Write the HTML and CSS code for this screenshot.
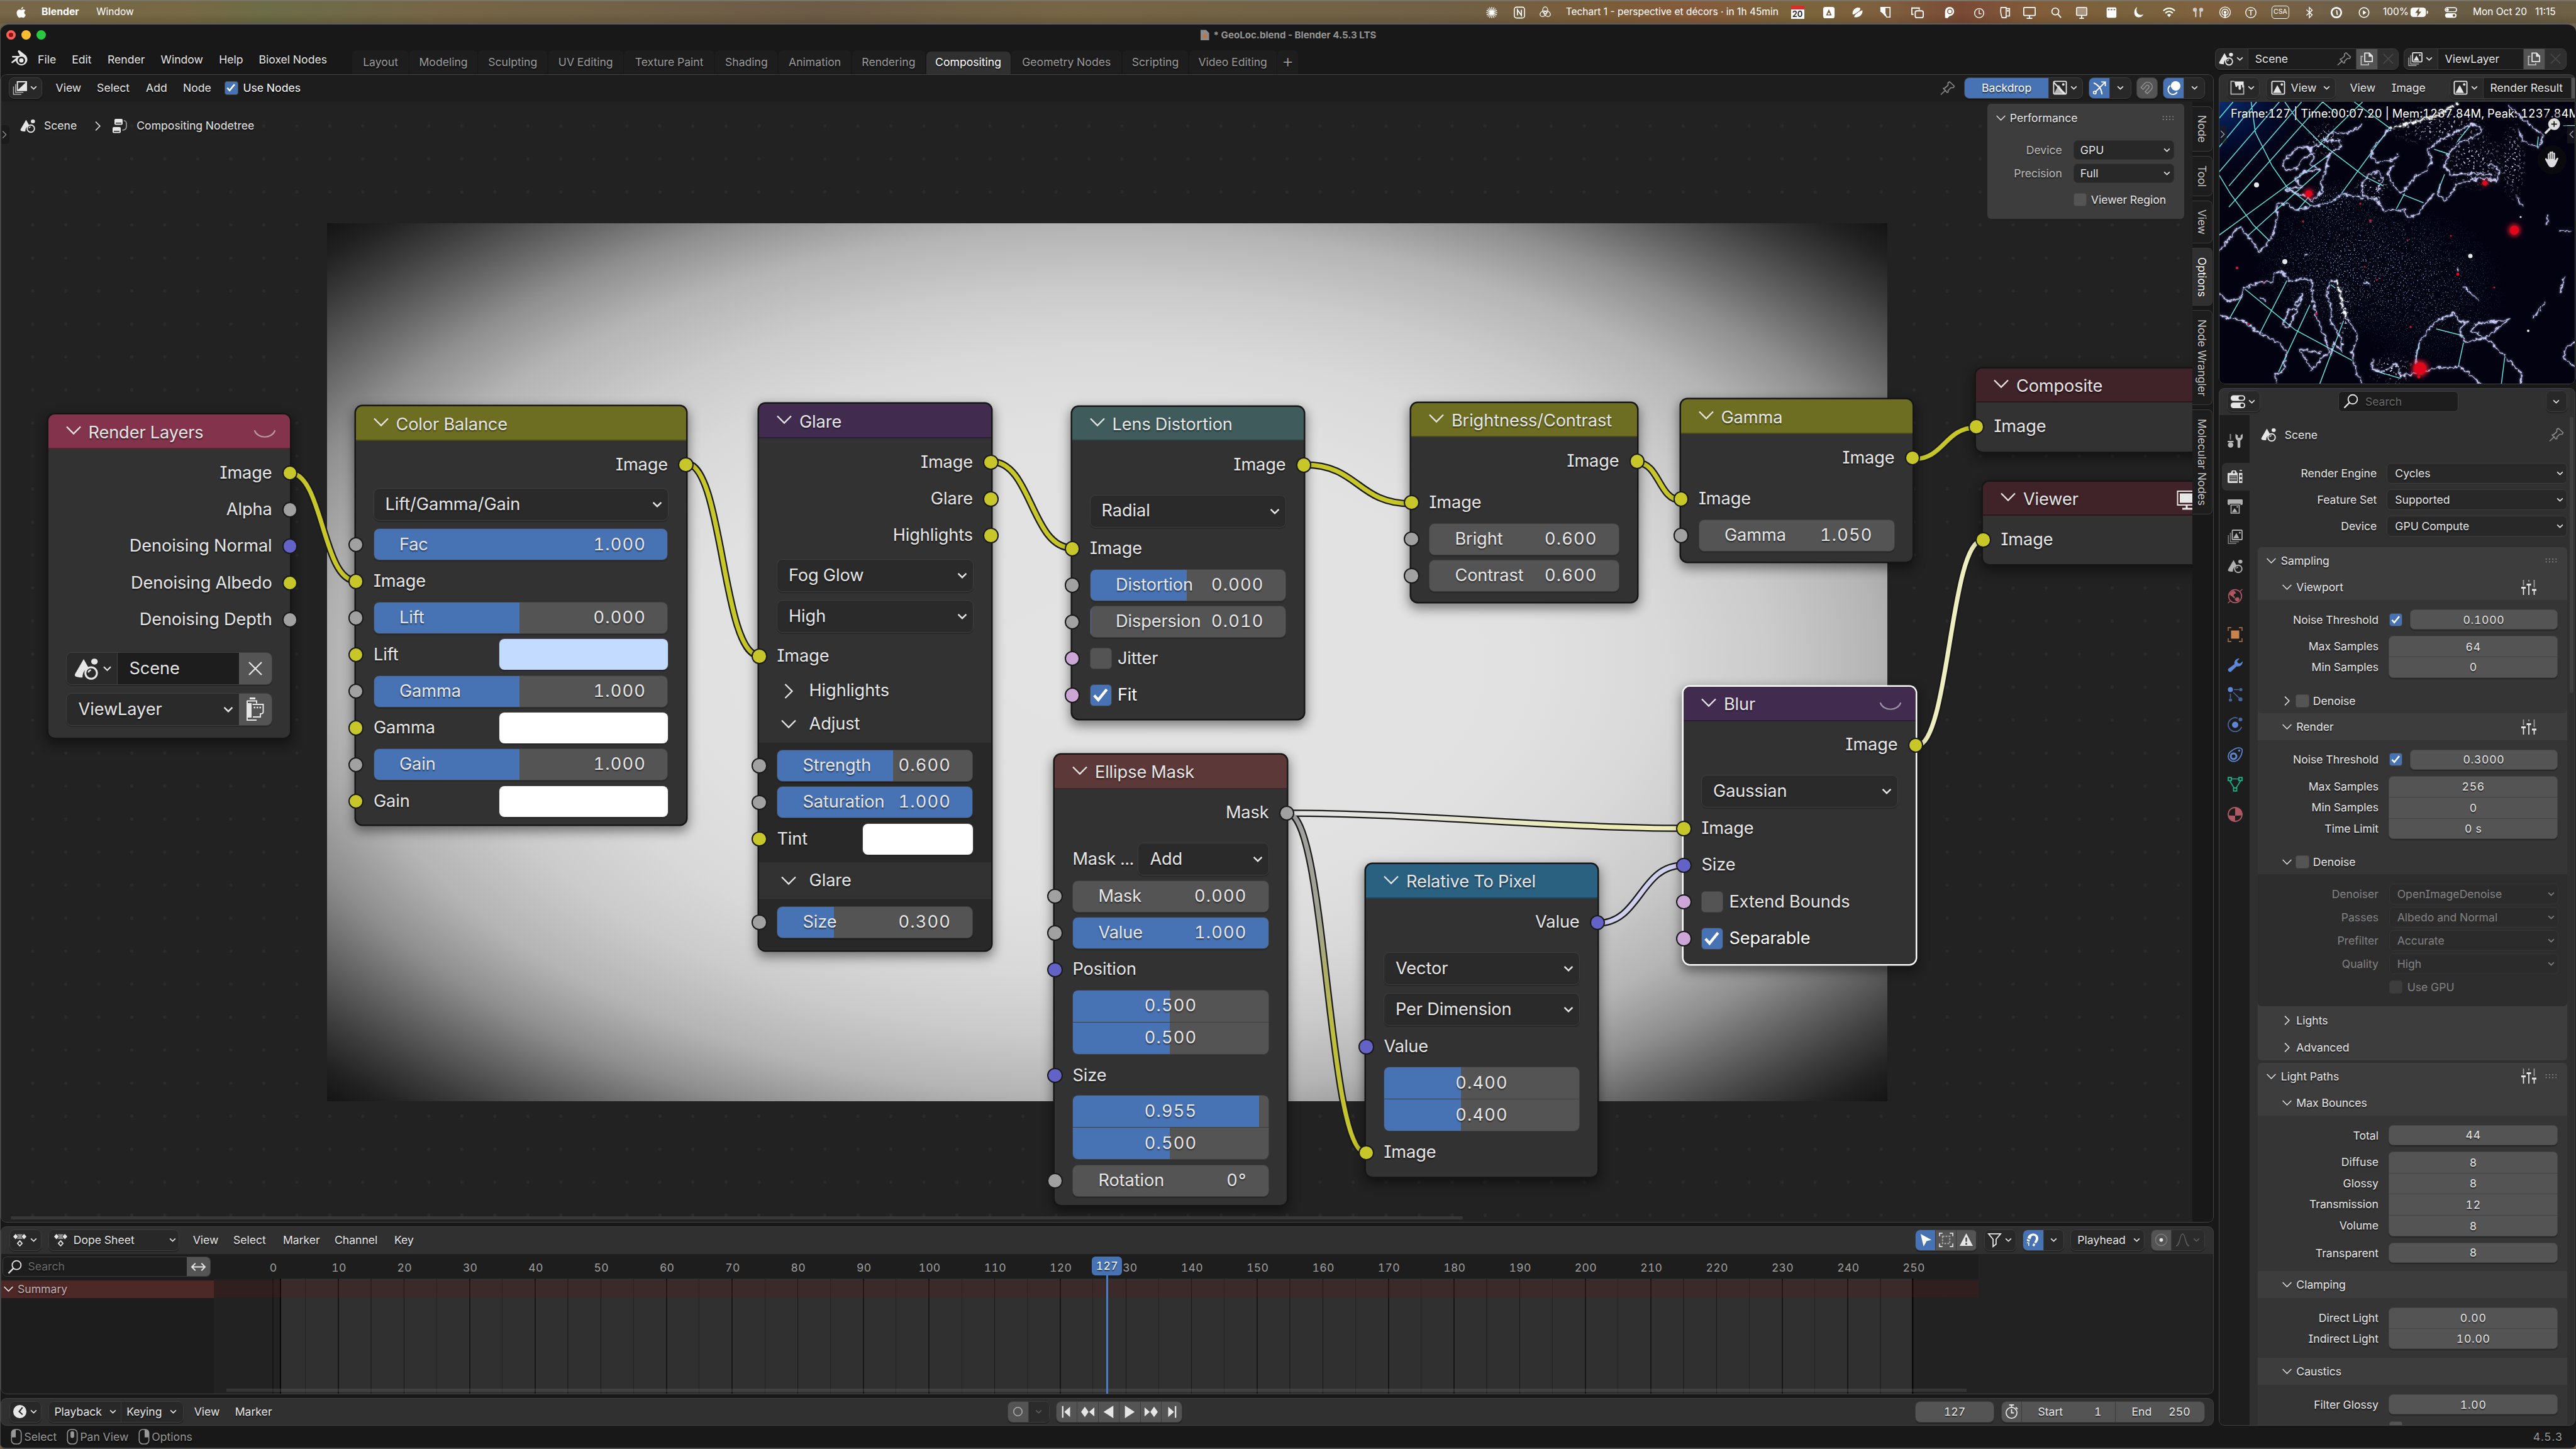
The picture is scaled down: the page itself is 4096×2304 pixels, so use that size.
FILE: index.html
```html
<!DOCTYPE html>
<html lang="en">
<head>
<meta charset="utf-8">
<title>GeoLoc.blend - Blender 4.5.3 LTS</title>
<link rel="stylesheet" href="styles.css">
</head>
<body>
<svg class="defs" width="0" height="0">
  <defs>
    <symbol id="down" viewBox="0 0 24 24"><path d="M5 8.500l7 7 7-7" fill="none" stroke="currentColor" stroke-width="2.600"/></symbol>
    <symbol id="fold" viewBox="0 0 24 24"><path d="M1 6.500l11 11 11-11" fill="none" stroke="currentColor" stroke-width="2.300"/></symbol>
    <symbol id="closed" viewBox="0 0 24 24"><path d="M6.500 1l11 11-11 11" fill="none" stroke="currentColor" stroke-width="2.300"/></symbol>
    <symbol id="check" viewBox="0 0 24 24"><path d="M4.500 13l5 5.500L20 5.500" fill="none" stroke="currentColor" stroke-width="3.400"/></symbol>
    <symbol id="x" viewBox="0 0 24 24"><path d="M4 4l16 16M20 4L4 20" fill="none" stroke="currentColor" stroke-width="1.800"/></symbol>
    <symbol id="scene" viewBox="0 0 24 24"><path d="M9.500 2.500L.8 17.500c-.8 2 .5 3.500 7.500 3.500.2-5 2-8 6.200-9.600z"/><ellipse cx="20.300" cy="5" rx="3.300" ry="3"/><circle cx="17" cy="16.500" r="5.800" fill="none" stroke="currentColor" stroke-width="1.900"/><path d="M14.200 16a3 3 0 0 1 2.600-2.500" fill="none" stroke="currentColor" stroke-width="1.500"/></symbol>
    <symbol id="pin" viewBox="0 0 24 24"><path d="M1 22.500l8-7.500M5 12.500l2.500-.5 5-4.500 0-4 2.500-1.500 7.500 7-1.500 2.300-4 .2-4.500 4.500.3 2.500-2 .5z" fill="none" stroke="currentColor" stroke-width="1.700" stroke-linejoin="round"/></symbol>
    <symbol id="dup" viewBox="0 0 24 24"><path d="M8.500 2.500h7.500l5 5v9H8.500z" fill="none" stroke="currentColor" stroke-width="1.900"/><path d="M15 2v6.500h6.500z"/><path d="M5.500 8H2.500v14h12v-3" fill="none" stroke="currentColor" stroke-width="1.900" opacity=".7"/></symbol>
    <symbol id="layers" viewBox="0 0 24 24"><rect x="7.500" y="2" width="15.500" height="15" rx="1" fill="none" stroke="currentColor" stroke-width="1.800"/><path d="M9 15l5-8.500 4.500 8.500z"/><circle cx="19.500" cy="6" r="1.500"/><path d="M4.500 6v14.500H18M1.200 10v13.300H14" fill="none" stroke="currentColor" stroke-width="1.600" opacity=".65"/></symbol>
    <symbol id="comp" viewBox="0 0 24 24"><path d="M8 2h15v14.500H8z" fill="none" stroke="currentColor" stroke-width="2"/><path d="M23 2v14.500H8z"/><path d="M5 6v13.500h13M1.500 10v13h13" fill="none" stroke="currentColor" stroke-width="1.600" opacity=".7"/></symbol>
    <symbol id="tree" viewBox="0 0 24 24"><rect x="4" y="1" width="13" height="9.500" rx="2"/><rect x="1" y="14" width="13" height="9.500" rx="2"/><path d="M6 7.800h9M3 20.800h9" stroke="#222" stroke-width="1.400"/><path d="M18.500 4c4 0 4.500 2 4.500 5v4c0 3-1 6-6.500 6" fill="none" stroke="currentColor" stroke-width="1.600" opacity=".65"/></symbol>
    <symbol id="pic" viewBox="0 0 24 24"><rect x="1.500" y="1.500" width="21" height="21" rx="1.500" fill="none" stroke="currentColor" stroke-width="1.900"/><path d="M3.500 20.500l7-13 7 13z"/><circle cx="18" cy="6.500" r="2"/></symbol>
    <symbol id="backdrop" viewBox="0 0 24 24"><rect x="1.500" y="1.500" width="21" height="21" rx="1.500" fill="none" stroke="currentColor" stroke-width="1.900"/><path d="M2 22L10 7l9 15z" opacity=".75"/><path d="M2 2l20 20h-5L2 5z"/><circle cx="17.500" cy="6.500" r="2"/></symbol>
    <symbol id="imged" viewBox="0 0 24 24"><path d="M7 1.500H1.500v21h21V8" fill="none" stroke="currentColor" stroke-width="1.900" opacity=".75"/><path d="M7 1.500h15.500v9c0 1.800-2.500 1.800-2.500 0V8.500c0-1.500-2-1.500-2 0v5c0 2.500-4 2.500-4 0v-4c0-1.500-2-1.500-2 0-.3 2-3 2-3 0z"/></symbol>
    <symbol id="gizmo" viewBox="0 0 24 24"><path d="M2 4c8 3 13 9 14 19M4.500 19.500L21 3M14.500 2.500H21.500v7" fill="none" stroke="currentColor" stroke-width="2"/><circle cx="4" cy="20" r="2.300" fill="none" stroke="currentColor" stroke-width="1.700"/></symbol>
    <symbol id="magnet" viewBox="0 0 24 24"><path d="M2.500 11.500L8.500 5c7-6.500 17 3.500 10.500 10.500l-6.300 6.300-3.400-3.400 6-6.300c2-2.600-1.200-5.800-3.800-3.800L6 14.800z" fill="none" stroke="currentColor" stroke-width="1.700"/></symbol>
    <symbol id="overlay" viewBox="0 0 24 24"><circle cx="15" cy="9" r="8"/><path d="M6 8.500a8 8 0 1 0 11.500 10.500" fill="none" stroke="currentColor" stroke-width="2"/><path d="M8 12a5 5 0 0 0 5 5" fill="none" stroke="#4772b3" stroke-width="1.600"/></symbol>
    <symbol id="dope" viewBox="0 0 24 24"><path d="M5 2l4 4.500-4 4.500-4-4.500zM19 2l4 4.500-4 4.500-4-4.500z"/><path d="M7 2.500h10l-3 4 3 4H7l3-4z" opacity=".55"/><path d="M12 13.500l3.800 4.300-3.800 4.200-3.800-4.200z" fill="none" stroke="currentColor" stroke-width="1.800"/></symbol>
    <symbol id="clock" viewBox="0 0 24 24"><circle cx="12" cy="12" r="11"/><path d="M16.500 5L11 12l5.500 5" fill="none" stroke="#282828" stroke-width="2.200"/></symbol>
    <symbol id="search" viewBox="0 0 24 24"><circle cx="15" cy="9" r="7.300" fill="none" stroke="currentColor" stroke-width="1.900"/><path d="M9.800 14.200L1.500 22.500" stroke="currentColor" stroke-width="2.400"/></symbol>
    <symbol id="props" viewBox="0 0 24 24"><rect x="0" y="1.500" width="24" height="9.500" rx="4.500"/><rect x="0" y="13.500" width="24" height="9.500" rx="4.500"/><rect x="13" y="3.500" width="9" height="5.500" rx="2.500" fill="#282828"/><rect x="16" y="15.500" width="6" height="5.500" rx="2.500" fill="#282828"/></symbol>
    <symbol id="tool" viewBox="0 0 24 24"><path d="M3.500 1h2v9h-2z" opacity=".7"/><circle cx="4.800" cy="18.500" r="4.300"/><path d="M0 12h9.500v2.200H0z"/><path d="M12.500 1v5c0 3 2 4.500 3.300 5.500V21c0 3 4.500 3 4.500 0v-9.500C21.500 10.500 24 9 24 6V1l-3.300 2v4h-4.500V3z"/></symbol>
    <symbol id="render" viewBox="0 0 24 24"><path d="M1 6h4l2-4h6l2 4h1v16H2c-1.500 0-2-1-2-2V7.500C0 6.500.5 6 1 6zM18 6h5.500v16H18z"/><path d="M19 2h4" stroke="currentColor" stroke-width="1.500"/><path d="M3 10h12v9H3z" fill="#303030"/><path d="M3.500 12h11M3.500 14.500h11M3.500 17h11" stroke="currentColor" stroke-width="1"/><circle cx="10" cy="5" r="1.800" fill="#303030"/><circle cx="21" cy="11" r="1.800" fill="#303030"/><circle cx="21" cy="17.500" r="1.800" fill="#303030"/></symbol>
    <symbol id="output" viewBox="0 0 24 24"><path d="M1 1h22l1 1v6c0 1-1 2-2 2h-1.500V8h-17v2H2c-1 0-2-1-2-2V2z"/><path d="M5.500 10h13v13h-13z" fill="none" stroke="currentColor" stroke-width="1.600"/><path d="M7 21.500l4-6.500 2.500 3 2 3.500z"/><circle cx="15.500" cy="13" r="1.300"/></symbol>
    <symbol id="world" viewBox="0 0 24 24"><circle cx="12" cy="12" r="10.300" fill="none" stroke="currentColor" stroke-width="1.700"/><path d="M4.500 6L9 3l3 1.500 1.500 3-3 1-1 3 2.500 2-1.500 2L6.500 12 3 9.500zM13 14.500l4-1 2 3-2 4-4-1-2-3z"/><path d="M20 4l3.500-3M4 20l-3.500 3" stroke="currentColor" stroke-width="1.500"/></symbol>
    <symbol id="object" viewBox="0 0 24 24"><rect x="5.500" y="5.500" width="13" height="13"/><path d="M1 6V1h5M18 1h5v5M23 18v5h-5M6 23H1v-5" fill="none" stroke="currentColor" stroke-width="1.800" opacity=".7"/></symbol>
    <symbol id="wrench" viewBox="0 0 24 24"><path d="M1 18.500L11 11c-1-5 2.500-9 8-9l-4 4.500 1.500 3L20 10l4-3.500c0 6-4.500 9-9.500 8L5.500 23c-3 1.500-6-1.500-4.500-4.500z"/></symbol>
    <symbol id="particles" viewBox="0 0 24 24"><circle cx="4.500" cy="4.500" r="4"/><g opacity=".65"><circle cx="21" cy="4.500" r="2.600"/><circle cx="20.500" cy="20" r="3.300"/><circle cx="4.500" cy="21" r="2.600"/><path d="M10 4.500h8M9 9l9 8.500M4.500 11v7" stroke="currentColor" stroke-width="1.700"/></g></symbol>
    <symbol id="physics" viewBox="0 0 24 24"><circle cx="12" cy="12.500" r="5"/><g opacity=".7"><path d="M16 2a11 11 0 1 0 6.300 14" fill="none" stroke="currentColor" stroke-width="1.700"/><circle cx="20.500" cy="4" r="3"/></g></symbol>
    <symbol id="constraint" viewBox="0 0 24 24"><path d="M5 7C9 4 13 1 18 1c5 .5 6 3 5 7-1 6-5 13-11 14.500-6 1-10.500-2-11-7C.8 12 2.500 9 5 7z" fill="none" stroke="currentColor" stroke-width="1.700"/><circle cx="9.500" cy="14.500" r="4.500" fill="none" stroke="currentColor" stroke-width="3"/><circle cx="18.500" cy="5.500" r="1.700"/></symbol>
    <symbol id="mesh" viewBox="0 0 24 24"><path d="M6 3.500h12M3.500 7l7 11M20.500 7l-7 11" stroke="currentColor" stroke-width="1.700"/><g fill="none" stroke="currentColor" stroke-width="1.800"><rect x="1" y="1.200" width="5" height="5"/><rect x="18" y="1.200" width="5" height="5"/><rect x="9.500" y="17.800" width="5" height="5"/></g></symbol>
    <symbol id="material" viewBox="0 0 24 24"><circle cx="12" cy="12" r="11" fill="none" stroke="currentColor" stroke-width="1.800"/><path d="M12 1a11 11 0 0 1 11 12.500L12 14zM12 23A11 11 0 0 1 1 13.500L12 14z"/></symbol>
    <symbol id="sliders" viewBox="0 0 24 24"><path d="M3.500 0v9M12 0v3M20.500 0v12" stroke="currentColor" stroke-width="1.800" opacity=".55"/><path d="M3.500 12v12M12 7v17M20.500 17v7" stroke="currentColor" stroke-width="1.800"/><path d="M0 12.500h7M8.500 7.500h7M17 16h7" stroke="currentColor" stroke-width="3"/></symbol>
    <symbol id="grip" viewBox="0 0 24 12"><rect x="1" y="2" width="2.400" height="2.400"/><rect x="8" y="2" width="2.400" height="2.400"/><rect x="15" y="2" width="2.400" height="2.400"/><rect x="22" y="2" width="2.400" height="2.400"/><rect x="1" y="8" width="2.400" height="2.400"/><rect x="8" y="8" width="2.400" height="2.400"/><rect x="15" y="8" width="2.400" height="2.400"/><rect x="22" y="8" width="2.400" height="2.400"/></symbol>
    <symbol id="blender" viewBox="0 0 28 28"><path d="M12 1.500c1-.8 2-.4 2.800.3l8.500 6.800a9.300 9.300 0 1 1-15.200 9L3 21.200c-1 .6-2.600-.9-1.500-1.900l8-6.700H3.300c-1.600 0-1.600-2.500 0-2.500h9.900l1.400-1.200L11.800 3.800c-.7-.6-.5-1.700.2-2.300z"/><circle cx="17" cy="17" r="6" fill="#181818"/><circle cx="17" cy="17" r="3.500"/></symbol>
    <symbol id="apple" viewBox="0 0 24 26"><path d="M16 1c.2 2.600-2 5-4.300 5C11.400 3.600 13.700 1.200 16 1zM12 7.300c1 0 2.200-1.100 4.200-1.100 1.800 0 3.400.9 4.400 2.300-3.800 2.200-3.200 7.600.7 9.100C20.200 20.600 18.100 24 16 24c-1.500 0-2.100-.9-3.900-.9S9.600 24 8.200 24C5.500 24 2 18.600 2 13.800c0-4.600 2.900-7.300 5.900-7.300 1.700 0 3 .8 4.100.8z"/></symbol>
    <symbol id="eye" viewBox="0 0 36 16"><path d="M2 2c5 13 27 13 32 0" fill="none" stroke="currentColor" stroke-width="2.200" stroke-linecap="round"/></symbol>
    <symbol id="monitor" viewBox="0 0 32 32"><rect x="1.500" y="2" width="30" height="22" fill="none" stroke="currentColor" stroke-width="2"/><rect x="5" y="5.500" width="27" height="15"/><path d="M16 24v5M9 30h18" stroke="currentColor" stroke-width="3"/></symbol>
    <symbol id="film" viewBox="0 0 28 38"><path d="M5 1.500h9" stroke="currentColor" stroke-width="3"/><path d="M1 5.500h15v4M1 5v31h15M9.500 11h17v12c0 2-2 3-4.500 3v5H10" fill="none" stroke="currentColor" stroke-width="2"/><path d="M0 9h8v23H0z"/><path d="M11.500 16h2.500M16 16h2.500M20.500 16h2.500" stroke="currentColor" stroke-width="2.500"/></symbol>
    <symbol id="m-l" viewBox="0 0 18 26"><rect x="1" y="1" width="16" height="24" rx="6" fill="none" stroke="currentColor" stroke-width="1.600"/><path d="M1 14V7c0-4 2-6 7-6v13z"/></symbol>
    <symbol id="m-m" viewBox="0 0 18 26"><rect x="1" y="1" width="16" height="24" rx="6" fill="none" stroke="currentColor" stroke-width="1.600"/><rect x="6" y="4" width="6" height="11" rx="3"/></symbol>
    <symbol id="m-r" viewBox="0 0 18 26"><rect x="1" y="1" width="16" height="24" rx="6" fill="none" stroke="currentColor" stroke-width="1.600"/><path d="M17 14V7c0-4-2-6-7-6v13z"/></symbol>
  </defs>
</svg>

<nav class="menubar">
  <div class="mac-left"><svg class="apple"><use href="#apple"/></svg><b>Blender</b><span>Window</span></div>
  <div class="mac-status">
    <svg viewBox="0 0 22 22"><path d="M11 1v20M1 11h20M4 4l14 14M18 4L4 18M7 2l8 18M15 2L7 20M2 7l18 8M20 7L2 15" stroke="#fff" stroke-width="1.300"/></svg>
    <svg viewBox="0 0 22 22"><rect x="2" y="1.500" width="18" height="19" rx="4" fill="none" stroke="#fff" stroke-width="1.700"/><path d="M7.500 16V6l7 10V6" fill="none" stroke="#fff" stroke-width="1.900"/></svg>
    <svg viewBox="0 0 22 22"><g fill="none" stroke="#fff" stroke-width="1.300"><ellipse cx="11" cy="7" rx="4.500" ry="6"/><ellipse cx="11" cy="7" rx="4.500" ry="6" transform="rotate(120 11 11)"/><ellipse cx="11" cy="7" rx="4.500" ry="6" transform="rotate(240 11 11)"/></g></svg>
    <span>Techart 1 - perspective et décors · in 1h 45min</span>
    <span class="cal">20</span>
    <svg viewBox="0 0 22 22"><rect x="1" y="1" width="20" height="20" rx="4" fill="#fff"/><path d="M11 5l5 11H6z" fill="#7b5b3c"/><circle cx="11" cy="13" r="1.800" fill="#fff"/></svg>
    <svg viewBox="0 0 22 22"><path d="M3 14C2 7 9 0 16 3c2 2-1 5-4 7s-6 5-9 4zM6 19c-1-3 8-10 14-12 2 6-5 14-14 12z" fill="#fff"/></svg>
    <svg viewBox="0 0 22 22"><path d="M3 2h16v17H13L10 12 3 9z" fill="none" stroke="#fff" stroke-width="1.800"/><path d="M2 2h9v16L3 9z" fill="#fff"/></svg>
    <svg viewBox="0 0 22 22"><rect x="7" y="8" width="14" height="12" rx="3" fill="none" stroke="#fff" stroke-width="2"/><path d="M4 14H1V3h13v3" fill="none" stroke="#fff" stroke-width="2"/></svg>
    <svg viewBox="0 0 22 22"><path d="M3 20V9a8 8 0 1 1 8 8l-4 4z" fill="#fff"/><circle cx="11.500" cy="9" r="4" fill="none" stroke="#85583c" stroke-width="1.600"/></svg>
    <svg viewBox="0 0 22 22"><circle cx="11" cy="12" r="8" fill="none" stroke="#fff" stroke-width="1.500"/><path d="M11 6v7h4" fill="none" stroke="#fff" stroke-width="1.500"/></svg>
    <svg viewBox="0 0 22 22"><path d="M4 2h9v18H6c-2-5-3-12-2-18zM13 4h6v13h-6" fill="none" stroke="#fff" stroke-width="1.800"/><circle cx="16" cy="8" r="1.600" fill="#fff"/></svg>
    <svg viewBox="0 0 22 22"><rect x="1" y="2" width="20" height="14" rx="1" fill="none" stroke="#fff" stroke-width="1.900"/><path d="M11 16v4M6 21h10" stroke="#fff" stroke-width="1.900"/></svg>
    <svg viewBox="0 0 22 22"><circle cx="10" cy="9" r="6" fill="none" stroke="#fff" stroke-width="1.800"/><path d="M14 13l6 7" stroke="#fff" stroke-width="2"/></svg>
    <svg viewBox="0 0 22 22"><rect x="2" y="2" width="18" height="14" rx="2" fill="#fff5" stroke="#fff" stroke-width="1.600"/><path d="M11 16v4M7 21h8" stroke="#fff" stroke-width="1.900"/></svg>
    <svg viewBox="0 0 22 22"><rect x="3" y="2" width="17" height="18" rx="2" fill="#fff"/><path d="M5 6h3M10 6h3M15 6h3" stroke="#7b5b3c" stroke-width="2"/></svg>
    <svg viewBox="0 0 22 22"><path d="M8 1c-4 9 2 17 11 13C15 22 3 21 3 11 3 6 5 3 8 1z" fill="#fff"/></svg>
    <svg viewBox="0 0 22 22"><path d="M1 8c6-6 14-6 20 0M4.500 12c4-4 9-4 13 0" fill="none" stroke="#fff" stroke-width="2.400"/><path d="M7.500 15c2-2 5-2 7 0L11 19z" fill="#fff"/></svg>
    <svg viewBox="0 0 22 22"><path d="M7 19V7M15 19V7" stroke="#ddd" stroke-width="2"/><circle cx="5.500" cy="6" r="3.500" fill="#ccc"/><circle cx="16.500" cy="6" r="3.500" fill="#ccc"/></svg>
    <svg viewBox="0 0 22 22"><g fill="none" stroke="#fff" stroke-width="1.500"><circle cx="11" cy="10.500" r="9.300"/><circle cx="11" cy="10.500" r="5.500"/></g><circle cx="11" cy="10.500" r="2.500" fill="#fff"/><path d="M11 13v7" stroke="#fff" stroke-width="2.500"/></svg>
    <svg viewBox="0 0 22 22"><circle cx="11" cy="11" r="9" fill="none" stroke="#fff" stroke-width="1.500"/><path d="M7 7h8M11 7v9" stroke="#fff" stroke-width="1.600"/></svg>
    <span class="csa">CSA</span>
    <svg viewBox="0 0 22 22"><path d="M6 6l10 9-5 5V2l5 5L6 16" fill="none" stroke="#fff" stroke-width="1.500"/></svg>
    <svg viewBox="0 0 22 22"><circle cx="11" cy="11" r="8.500" fill="none" stroke="#fff" stroke-width="3"/><path d="M11 7c2 3 0 5 2 8" stroke="#fff" stroke-width="2" fill="none"/></svg>
    <svg viewBox="0 0 22 22"><circle cx="11" cy="11" r="8.500" fill="none" stroke="#fff" stroke-width="1.700"/><path d="M9 7l6 4-6 4z" fill="#fff"/></svg>
    <span>100%</span>
    <svg class="batt" viewBox="0 0 30 18"><rect x="0" y="1" width="26" height="16" rx="5" fill="#fff" opacity=".95"/><path d="M27.500 6v6c1.500 0 2-1 2-3s-.5-3-2-3z" fill="#fff"/><path d="M15 1L8 10h4l-1 7 7-9h-4z" fill="#6a5a3a"/></svg>
    <svg viewBox="0 0 22 22"><rect x="1" y="2.500" width="20" height="7" rx="3.500" fill="none" stroke="#fff" stroke-width="1.600"/><rect x="1" y="12" width="20" height="8" rx="4" fill="#fff"/><circle cx="5" cy="6" r="2.500" fill="#fff"/><circle cx="16.500" cy="16" r="2.300" fill="#6d5a3c"/></svg>
    <span>Mon Oct 20</span><span>11:15</span>
  </div>
</nav>

<div class="window">
  <header class="titlebar">
    <div class="lights"><i class="red"></i><i class="amber"></i><i class="green"></i></div>
    <div class="title"><i class="doc"></i><b>* GeoLoc.blend - Blender 4.5.3 LTS</b></div>
  </header>

  <div class="topbar">
    <div class="app-menu"><svg class="logo"><use href="#blender"/></svg><span>File</span><span>Edit</span><span>Render</span><span>Window</span><span>Help</span><span>Bioxel Nodes</span></div>
    <div class="workspaces"><span>Layout</span><span>Modeling</span><span>Sculpting</span><span>UV Editing</span><span>Texture Paint</span><span>Shading</span><span>Animation</span><span>Rendering</span><span class="on">Compositing</span><span>Geometry Nodes</span><span>Scripting</span><span>Video Editing</span><span class="plus">+</span></div>
    <div class="selectors">
      <div class="grp scene-sel"><span class="c icon-drop"><svg><use href="#scene"/></svg><svg class="dn"><use href="#down"/></svg></span><span class="c name">Scene<svg class="dim"><use href="#pin"/></svg></span><span class="c lit"><svg><use href="#dup"/></svg></span><span class="c off"><svg><use href="#x"/></svg></span></div>
      <div class="grp layer-sel"><span class="c icon-drop"><svg><use href="#layers"/></svg><svg class="dn"><use href="#down"/></svg></span><span class="c name">ViewLayer</span><span class="c lit"><svg><use href="#dup"/></svg></span><span class="c off"><svg><use href="#x"/></svg></span></div>
    </div>
  </div>

  <main class="work">
    <div class="left">
      <section class="area node-area">
        <div class="bar node-bar">
          <div class="node-bar-l"><span class="grp ed"><span class="c"><svg><use href="#comp"/></svg><svg class="dn"><use href="#down"/></svg></span></span><span>View</span><span>Select</span><span>Add</span><span>Node</span><span class="cb on"><svg><use href="#check"/></svg></span><span class="w">Use Nodes</span></div>
          <div class="node-bar-r"><svg class="dim"><use href="#pin"/></svg>
            <span class="grp g1"><span class="c blue bd">Backdrop</span><span class="c"><svg><use href="#backdrop"/></svg><svg class="dn"><use href="#down"/></svg></span></span>
            <span class="grp g2"><span class="c blue"><svg><use href="#gizmo"/></svg></span><span class="c"><svg class="dn"><use href="#down"/></svg></span></span>
            <span class="grp g3"><span class="c lit faint"><svg><use href="#magnet"/></svg></span></span>
            <span class="grp g4"><span class="c blue"><svg><use href="#overlay"/></svg></span><span class="c"><svg class="dn"><use href="#down"/></svg></span></span>
          </div>
        </div>
        <div class="node-body">
          <div class="canvas">
            <div class="plane">
              <div class="backdrop"></div>
              <svg class="links" width="3600" height="2000">
                <defs>
                  <linearGradient id="lg1" gradientUnits="userSpaceOnUse" x1="2047" y1="0" x2="2676" y2="0"><stop offset="0" stop-color="#e4e4e4"/><stop offset=".35" stop-color="#e4e4da"/><stop offset=".7" stop-color="#ecebb8"/><stop offset="1" stop-color="#eeedb4"/></linearGradient>
                  <linearGradient id="lg2" gradientUnits="userSpaceOnUse" x1="0" y1="1293" x2="0" y2="1832"><stop offset="0" stop-color="#a1a1a1"/><stop offset=".3" stop-color="#a1a192"/><stop offset=".65" stop-color="#bdbd40"/><stop offset="1" stop-color="#c7c729"/></linearGradient>
                </defs>
                <g class="edge">
                  <path d="M461 752C513 752 513 923 565 923"/><path d="M1091 737C1150 737 1148 1042 1207 1042"/><path d="M1576 734C1640 734 1640 871 1704 871"/><path d="M2074 739C2160 739 2158 801 2244 801"/><path d="M2604 736C2638 736 2638 795 2672 795"/><path d="M3042 730C3092 730 3092 680 3142 680"/><path d="M2047 1293C2250 1293 2480 1317 2676 1317"/><path d="M2047 1293C2110 1293 2110 1833 2172 1833"/><path d="M2540 1468C2608 1468 2608 1376 2676 1376"/><path d="M3047 1186C3100 1186 3100 859 3153 859"/>
                </g>
                <g class="wire">
                  <path d="M461 752C513 752 513 923 565 923"/><path d="M1091 737C1150 737 1148 1042 1207 1042"/><path d="M1576 734C1640 734 1640 871 1704 871"/><path d="M2074 739C2160 739 2158 801 2244 801"/><path d="M2604 736C2638 736 2638 795 2672 795"/><path d="M3042 730C3092 730 3092 680 3142 680"/><path d="M2047 1293C2250 1293 2480 1317 2676 1317" stroke="url(#lg1)"/><path d="M2047 1293C2110 1293 2110 1833 2172 1833" stroke="url(#lg2)"/><path class="wv" d="M2540 1468C2608 1468 2608 1376 2676 1376"/><path class="wy" d="M3047 1186C3100 1186 3100 859 3153 859"/>
                </g>
              </svg>

              <article class="node n-layers">
                <h3><svg><use href="#fold"/></svg>Render Layers<svg class="eye"><use href="#eye"/></svg></h3>
                <div class="row out">Image<i class="s y"></i></div><div class="row out">Alpha<i class="s g"></i></div><div class="row out">Denoising Normal<i class="s v"></i></div><div class="row out">Denoising Albedo<i class="s y"></i></div><div class="row out">Denoising Depth<i class="s g"></i></div>
                <div class="drow t16"><div class="idsel"><span class="ic"><svg><use href="#scene"/></svg><svg class="dn"><use href="#down"/></svg></span><span class="nm">Scene</span><span class="bt"><svg><use href="#x"/></svg></span></div></div>
                <div class="drow"><div class="idsel"><span class="vl">ViewLayer<svg class="dn"><use href="#down"/></svg></span><span class="bt film"><svg><use href="#film"/></svg></span></div></div>
              </article>

              <article class="node n-balance olive">
                <h3><svg><use href="#fold"/></svg>Color Balance</h3>
                <div class="row out">Image<i class="s y"></i></div>
                <div class="drow t2"><div class="drop">Lift/Gamma/Gain<svg class="dn"><use href="#down"/></svg></div></div>
                <div class="row t2"><i class="s g"></i><div class="num" style="--f:100%"><span>Fac</span><em>1.000</em></div></div>
                <div class="row"><i class="s y"></i>Image</div>
                <div class="row"><i class="s g"></i><div class="num" style="--f:49.500%"><span>Lift</span><em>0.000</em></div></div>
                <div class="row"><i class="s y"></i>Lift<b class="swatch pale"></b></div>
                <div class="row"><i class="s g"></i><div class="num" style="--f:49.500%"><span>Gamma</span><em>1.000</em></div></div>
                <div class="row"><i class="s y"></i>Gamma<b class="swatch"></b></div>
                <div class="row"><i class="s g"></i><div class="num" style="--f:49.500%"><span>Gain</span><em>1.000</em></div></div>
                <div class="row"><i class="s y"></i>Gain<b class="swatch"></b></div>
              </article>

              <article class="node n-glare purple">
                <h3><svg><use href="#fold"/></svg>Glare</h3>
                <div class="row out">Image<i class="s y"></i></div><div class="row out">Glare<i class="s y"></i></div><div class="row out">Highlights<i class="s y"></i></div>
                <div class="drow t2"><div class="drop">Fog Glow<svg class="dn"><use href="#down"/></svg></div></div>
                <div class="drow"><div class="drop">High<svg class="dn"><use href="#down"/></svg></div></div>
                <div class="row t2"><i class="s y"></i>Image</div>
                <div class="sub s52"><svg><use href="#closed"/></svg>Highlights</div>
                <div class="sub s56"><svg><use href="#fold"/></svg>Adjust</div>
                <div class="inner">
                  <div class="row"><i class="s g"></i><div class="num" style="--f:59.500%"><span>Strength</span><em>0.600</em></div></div>
                  <div class="row"><i class="s g"></i><div class="num" style="--f:100%"><span>Saturation</span><em>1.000</em></div></div>
                  <div class="row"><i class="s y"></i>Tint<b class="swatch"></b></div>
                </div>
                <div class="sub s58"><svg><use href="#fold"/></svg>Glare</div>
                <div class="inner last"><div class="row"><i class="s g"></i><div class="num" style="--f:29%"><span>Size</span><em>0.300</em></div></div></div>
              </article>

              <article class="node n-lens teal">
                <h3><svg><use href="#fold"/></svg>Lens Distortion</h3>
                <div class="row out">Image<i class="s y"></i></div>
                <div class="drow t12"><div class="drop">Radial<svg class="dn"><use href="#down"/></svg></div></div>
                <div class="row up2"><i class="s y"></i>Image</div>
                <div class="row"><i class="s g"></i><div class="num" style="--f:49.200%"><span>Distortion</span><em>0.000</em></div></div>
                <div class="row"><i class="s g"></i><div class="num" style="--f:.4%"><span>Dispersion</span><em>0.010</em></div></div>
                <div class="row"><i class="s b"></i><i class="box"></i>Jitter</div>
                <div class="row w"><i class="s b"></i><i class="box on"><svg><use href="#check"/></svg></i>Fit</div>
              </article>

              <article class="node n-bright olive">
                <h3><svg><use href="#fold"/></svg>Brightness/Contrast</h3>
                <div class="row out t4">Image<i class="s y"></i></div>
                <div class="row t7"><i class="s y"></i>Image</div>
                <div class="row"><i class="s g"></i><div class="num"><span>Bright</span><em>0.600</em></div></div>
                <div class="row"><i class="s g"></i><div class="num"><span>Contrast</span><em>0.600</em></div></div>
              </article>

              <article class="node n-gamma olive">
                <h3><svg><use href="#fold"/></svg>Gamma</h3>
                <div class="row out t4">Image<i class="s y"></i></div>
                <div class="row t7"><i class="s y"></i>Image</div>
                <div class="row"><i class="s g"></i><div class="num"><span>Gamma</span><em>1.050</em></div></div>
              </article>

              <article class="node n-composite wine">
                <h3><svg><use href="#fold"/></svg>Composite</h3>
                <div class="row t3"><i class="s y"></i>Image</div>
              </article>
              <article class="node n-viewer wine">
                <h3><svg><use href="#fold"/></svg>Viewer<svg class="mon"><use href="#monitor"/></svg></h3>
                <div class="row t3"><i class="s y"></i>Image</div>
              </article>

              <article class="node n-ellipse brick">
                <h3><svg><use href="#fold"/></svg>Ellipse Mask</h3>
                <div class="row out">Mask<i class="s g"></i></div>
                <div class="row t15"><span class="lab">Mask ...</span><div class="drop">Add<svg class="dn"><use href="#down"/></svg></div></div>
                <div class="row t1"><i class="s g"></i><div class="num"><span>Mask</span><em>0.000</em></div></div>
                <div class="row"><i class="s g"></i><div class="num" style="--f:100%"><span>Value</span><em>1.000</em></div></div>
                <div class="row"><i class="s v"></i>Position</div>
                <div class="vec t3"><em style="--f:49.500%">0.500</em><em style="--f:49.500%">0.500</em></div>
                <div class="row t4"><i class="s v"></i>Size</div>
                <div class="vec t2"><em style="--f:95.300%">0.955</em><em style="--f:49.500%">0.500</em></div>
                <div class="row t4"><i class="s g"></i><div class="num"><span>Rotation</span><em>0°</em></div></div>
              </article>

              <article class="node n-pixel blue-h">
                <h3><svg><use href="#fold"/></svg>Relative To Pixel</h3>
                <div class="row out t3">Value<i class="s v"></i></div>
                <div class="drow t12"><div class="drop">Vector<svg class="dn"><use href="#down"/></svg></div></div>
                <div class="drow"><div class="drop">Per Dimension<svg class="dn"><use href="#down"/></svg></div></div>
                <div class="row up2"><i class="s v"></i>Value</div>
                <div class="vec t3"><em style="--f:39.300%">0.400</em><em style="--f:39.300%">0.400</em></div>
                <div class="row t4"><i class="s y"></i>Image</div>
              </article>

              <article class="node n-blur purple selected">
                <h3><svg><use href="#fold"/></svg>Blur<svg class="eye"><use href="#eye"/></svg></h3>
                <div class="row out t3">Image<i class="s y"></i></div>
                <div class="drow t12"><div class="drop">Gaussian<svg class="dn"><use href="#down"/></svg></div></div>
                <div class="row up2"><i class="s y"></i>Image</div>
                <div class="row"><i class="s v"></i>Size</div>
                <div class="row"><i class="s b"></i><i class="box"></i>Extend Bounds</div>
                <div class="row w"><i class="s b"></i><i class="box on"><svg><use href="#check"/></svg></i>Separable</div>
              </article>
            </div>

            <div class="crumbs"><svg><use href="#scene"/></svg><span>Scene</span><svg class="sm"><use href="#closed"/></svg><svg><use href="#tree"/></svg><span class="nt">Compositing Nodetree</span></div>
            <div class="edge-arrow"><svg><use href="#closed"/></svg></div>
            <aside class="npanel">
              <h4><svg><use href="#fold"/></svg>Performance<svg class="grip"><use href="#grip"/></svg></h4>
              <label>Device</label><div class="dd">GPU<svg class="dn"><use href="#down"/></svg></div>
              <label>Precision</label><div class="dd">Full<svg class="dn"><use href="#down"/></svg></div>
              <div class="chk"><i class="cb"></i>Viewer Region</div>
            </aside>
            <div class="hscroll"></div>
          </div>
          <div class="vtabs"><span class="v1">Node</span><span class="v2">Tool</span><span class="v3">View</span><span class="v4 on">Options</span><span class="v5">Node Wrangler</span><span class="v6">Molecular Nodes</span></div>
        </div>
      </section>

      <section class="area dope-area">
        <div class="bar">
          <div class="dope-l"><span class="grp"><span class="c"><svg><use href="#dope"/></svg><svg class="dn"><use href="#down"/></svg></span></span><span class="grp mode"><span class="c"><svg><use href="#dope"/></svg>Dope Sheet<svg class="dn"><use href="#down"/></svg></span></span><span>View</span><span>Select</span><span>Marker</span><span>Channel</span><span>Key</span></div>
          <div class="dope-r">
            <span class="grp d1"><span class="c blue"><svg viewBox="0 0 24 24"><path d="M4 2l18 10-8 2-5 9z"/></svg></span><span class="c lit"><svg viewBox="0 0 24 24"><path d="M1 6V1h5M18 1h5v5M23 18v5h-5M6 23H1v-5" fill="none" stroke="#ddd" stroke-width="1.800"/><rect x="6" y="6" width="12" height="12" fill="none" stroke="#aaa" stroke-width="2" stroke-dasharray="3 2"/></svg></span><span class="c lit"><svg viewBox="0 0 24 24"><path d="M12 1l11 21H1z"/><path d="M12 8v7M12 17v3" stroke="#444" stroke-width="2.500"/></svg></span></span>
            <span class="grp d2"><span class="c"><svg viewBox="0 0 24 24"><path d="M2 2h20l-7.500 9v8l-5 4V11z" fill="none" stroke="#e6e6e6" stroke-width="1.900"/></svg><svg class="dn"><use href="#down"/></svg></span></span>
            <span class="grp d3"><span class="c blue"><svg viewBox="0 0 24 24"><path d="M3 9C5-1 20-1 21 9c0 4-2 6-4 9l-3-2c6-8 1-12-2-11-3 0-3 4-4 6zM13 17.500l3 2-2 3.500-3-2zM2 10.500l5 2-1 2.500-4-1.500z"/><path d="M2 17h3v5" stroke="#fff" stroke-width="1.700" fill="none"/></svg></span><span class="c"><svg class="dn"><use href="#down"/></svg></span></span>
            <span class="grp d4"><span class="c">Playhead<svg class="dn"><use href="#down"/></svg></span></span>
            <span class="grp d5"><span class="c lit"><svg viewBox="0 0 24 24"><circle cx="12" cy="12" r="9.500" fill="none" stroke="#777" stroke-width="1.700"/><circle cx="12" cy="12" r="3"/></svg></span><span class="c ghost"><svg viewBox="0 0 24 24"><path d="M1 22C8 22 7 2 12 2s4 20 11 20" fill="none" stroke="currentColor" stroke-width="1.600"/></svg><svg class="dn"><use href="#down"/></svg></span></span>
          </div>
        </div>
        <div class="dope-body">
          <div class="channels">
            <div class="find"><svg><use href="#search"/></svg><span>Search</span><b><svg viewBox="0 0 24 24"><path d="M7 6l-6 6 6 6M17 6l6 6-6 6M1 12h22" fill="none" stroke="currentColor" stroke-width="2"/></svg></b></div>
            <div class="summary"><svg><use href="#fold"/></svg>Summary</div>
          </div>
          <div class="timeline">
            <div class="ruler"><span>0</span><span>10</span><span>20</span><span>30</span><span>40</span><span>50</span><span>60</span><span>70</span><span>80</span><span>90</span><span>100</span><span>110</span><span>120</span><span>130</span><span>140</span><span>150</span><span>160</span><span>170</span><span>180</span><span>190</span><span>200</span><span>210</span><span>220</span><span>230</span><span>240</span><span>250</span></div>
            <div class="tracks"><div class="range"></div><div class="ticks"></div><div class="band"></div><div class="tscroll"></div></div>
            <div class="playhead"><b>127</b></div>
          </div>
        </div>
      </section>

      <section class="area play-area">
        <div class="bar">
          <div class="play-l"><span class="grp"><span class="c"><svg><use href="#clock"/></svg><svg class="dn"><use href="#down"/></svg></span></span><span class="grp"><span class="c pb">Playback<svg class="dn"><use href="#down"/></svg></span><span class="c">Keying<svg class="dn"><use href="#down"/></svg></span></span><span>View</span><span>Marker</span></div>
          <div class="play-c"><span class="grp rec"><span class="c lit"><svg viewBox="0 0 24 24"><circle cx="12" cy="12" r="7" fill="none" stroke="#aaa" stroke-width="1.700"/></svg></span><span class="c ghost"><svg class="dn"><use href="#down"/></svg></span></span>
            <span class="grp trans"><span class="c lit"><svg viewBox="0 0 24 24"><path d="M4 2h2.500v20H4zM18 3v18L8 12z"/></svg></span><span class="c lit"><svg viewBox="0 0 24 24"><path d="M6.500 3l6.500 9-6.500 9L0 12zM23 4v16l-9-8z"/></svg></span><span class="c lit"><svg viewBox="0 0 24 24"><path d="M20 1v22L3 12z"/></svg></span><span class="c lit"><svg viewBox="0 0 24 24"><path d="M4 1v22l17-11z"/></svg></span><span class="c lit"><svg viewBox="0 0 24 24"><path d="M17.500 3l6.500 9-6.500 9-6.500-9zM1 4v16l9-8z"/></svg></span><span class="c lit"><svg viewBox="0 0 24 24"><path d="M17.500 2H20v20h-2.500zM6 3v18l10-9z"/></svg></span></span></div>
          <div class="play-r"><span class="grp cur"><span class="c lit">127</span></span><span class="grp ends"><span class="c lit ck"><svg viewBox="0 0 24 24"><circle cx="12" cy="14" r="9" fill="none" stroke="#e6e6e6" stroke-width="1.800"/><path d="M12 8v6h4M8 1h8M12 1v4M19 5l3 3" fill="none" stroke="#e6e6e6" stroke-width="2"/></svg></span><span class="c lit st"><span>Start</span><span>1</span></span><span class="c lit en"><span>End</span><span>250</span></span></span></div>
        </div>
      </section>
    </div>

    <div class="right">
      <section class="area image-area">
        <div class="bar image-bar">
          <span class="grp"><span class="c"><svg><use href="#imged"/></svg><svg class="dn"><use href="#down"/></svg></span></span>
          <span class="grp vw"><span class="c"><svg><use href="#pic"/></svg>View<svg class="dn"><use href="#down"/></svg></span></span>
          <span>View</span><span>Image</span>
          <span class="grp rr"><span class="c ri"><svg><use href="#pic"/></svg><svg class="dn"><use href="#down"/></svg></span><span class="c name">Render Result</span><span class="c lit"></span></span>
        </div>
        <div class="render">
          <svg class="map" viewBox="0 0 567 449" preserveAspectRatio="none">
            <defs>
              <radialGradient id="sky" cx="0" cy="0" r=".3"><stop offset="0" stop-color="#0a2d6e"/><stop offset=".4" stop-color="#03103a"/><stop offset="1" stop-color="#020316" stop-opacity="0"/></radialGradient>
              <filter id="rough" x="-5%" y="-5%" width="110%" height="110%"><feTurbulence type="fractalNoise" baseFrequency=".16" numOctaves="2" seed="4"/><feDisplacementMap in="SourceGraphic" scale="9" xChannelSelector="R" yChannelSelector="G" result="d"/><feGaussianBlur in="d" stdDeviation="1.800" result="b"/><feMerge><feMergeNode in="b"/><feMergeNode in="d"/></feMerge></filter>
              <filter id="lights" x="0" y="0" width="100%" height="100%"><feTurbulence type="fractalNoise" baseFrequency=".45" numOctaves="2" seed="9"/><feColorMatrix values="0 0 0 0 .12  0 0 0 0 .5  0 0 0 0 .78  12 0 0 0 -7.700"/><feComposite in2="SourceGraphic" operator="in"/></filter>
              <filter id="islands" x="0" y="0" width="100%" height="100%"><feTurbulence type="fractalNoise" baseFrequency=".26" numOctaves="2" seed="21"/><feColorMatrix values="0 0 0 0 .82  0 0 0 0 .83  0 0 0 0 1  14 0 0 0 -8.700"/><feComposite in2="SourceGraphic" operator="in"/></filter>
              <filter id="glow" x="-100%" y="-100%" width="300%" height="300%"><feGaussianBlur stdDeviation="4"/></filter>
              <radialGradient id="fade"><stop offset="0" stop-color="#fff"/><stop offset="1" stop-color="#fff" stop-opacity="0"/></radialGradient>
            </defs>
            <rect width="567" height="449" fill="#020211"/><rect width="567" height="449" fill="url(#sky)"/>
            <g transform="scale(.6686 .3343) translate(-718 -155)">
              <g class="grid">
                <path d="M718 235L752 155M718 372L808 155M718 490L862 155M742 555L915 155M742 655L965 155M718 790L985 400M785 795L960 480M905 670L935 600M1010 590L1125 275M960 350L1060 155M718 500L745 590L800 740L838 815M795 155L805 300L845 460L880 560L935 645M875 155L905 240L960 350L1065 510L1110 555M1040 155L1125 280M965 155L1000 215M1230 380L1268 405M1155 595L1205 635M1140 665L1160 590M1285 345L1315 270M745 1180L772 1085M780 1045L900 1240L1035 1385M815 1258L880 1005M860 1440L935 1120M958 1497L1015 1195M1090 1435L1150 1470M985 1025L995 1040M1235 1235L1300 1268M1195 1300L1187 1375M1288 1412L1300 1300M1390 1497L1398 1370M1537 268H1566M1475 370L1478 320M1255 500L1238 585"/>
              </g>
            </g>
            <g filter="url(#rough)"><g transform="scale(.6686 .3343) translate(-718 -155)"><g class="coast">
              <path class="hot" d="M1290 160L1240 215L1200 240L1150 270L1125 280"/>
              <path d="M1125 280L1105 330L1085 370L1080 420L1100 445L1130 430L1145 410M1135 450L1120 490L1125 530L1150 590L1165 560L1185 510L1215 480L1225 420L1215 380L1250 330L1290 290L1320 262L1342 280L1335 310L1290 350L1265 400L1255 460L1270 500L1320 495L1370 500"/>
              <path d="M1245 545L1240 600L1260 625L1270 590L1285 545L1340 520L1380 530L1385 480L1360 450M1230 590L1205 650L1195 690L1165 700L1160 670L1110 670L1095 620L1060 600L1060 540L1075 500L1100 485L1110 520L1095 580"/>
              <path d="M1060 610L1010 595L990 625L960 645L900 670L885 640L856 636L858 700L845 800L815 870L790 800L770 752L760 760L718 870"/>
              <path d="M965 350L935 375L945 420L935 450L960 480L925 485L900 520L915 560L875 570L930 605L940 628L965 580L960 540L975 470L980 400L1010 370L1005 340L970 340L985 300L1025 305L1060 265"/>
              <path d="M870 440L875 480L905 470L915 430L940 400L930 370L905 375L885 410Z"/>
              <path d="M718 1065L740 1108L770 1090L780 1040L820 1010L845 1010L850 970L868 958L885 1005L920 995L940 1010L940 1080L950 1180L970 1270L980 1350L965 1370L940 1430L910 1330L960 1350"/>
              <path d="M1000 1005L985 1005L975 1060L985 1150L985 1200L1010 1280L1010 1340L990 1300L985 1370M915 1070L900 1120L910 1128ZM885 1140L870 1220L885 1225L905 1140Z"/>
              <path class="hot" d="M1000 1005L1010 1100L1020 1180"/><path d="M1020 1180L1050 1260L1035 1350L1045 1440L1060 1490M718 1170L750 1185L780 1200L810 1250L860 1300L880 1350L870 1440L850 1450L855 1490"/>
              <path d="M1085 1380L1080 1420L1110 1440L1140 1400L1150 1460L1175 1450L1200 1440L1240 1420L1290 1415L1310 1440L1340 1497M1185 1400L1195 1300L1215 1240L1240 1190L1280 1160L1290 1200L1310 1200L1290 1240L1305 1300L1360 1270L1395 1210L1410 1190L1330 1210L1320 1240L1360 1290L1400 1370L1440 1450L1435 1497"/>
              <path d="M1566 1300L1545 1320L1537 1370L1566 1420M1540 985L1530 1060M1495 1105L1480 1150L1465 1185M1300 1030L1315 1060L1335 1100M1285 940L1288 965M1500 695V735M1405 170L1460 270L1490 310L1480 375L1440 340L1430 280M1525 768H1558M1430 605L1440 655M1060 1018L1078 1012M920 885L932 880M815 1085L830 1105"/>
            </g></g></g>
            <g filter="url(#islands)"><ellipse cx="405" cy="92" rx="58" ry="52" fill="url(#fade)"/><ellipse cx="345" cy="38" rx="85" ry="34" fill="url(#fade)"/><ellipse cx="468" cy="95" rx="22" ry="70" fill="url(#fade)"/><ellipse cx="245" cy="138" rx="32" ry="34" fill="url(#fade)"/><ellipse cx="168" cy="60" rx="34" ry="30" fill="url(#fade)"/><ellipse cx="275" cy="425" rx="42" ry="28" fill="url(#fade)"/><ellipse cx="200" cy="335" rx="14" ry="60" fill="url(#fade)"/></g>
            <g filter="url(#lights)"><ellipse cx="210" cy="255" rx="160" ry="120" fill="url(#fade)"/><ellipse cx="330" cy="300" rx="130" ry="130" fill="url(#fade)" opacity=".7"/><ellipse cx="180" cy="160" rx="50" ry="40" fill="url(#fade)"/></g>
            <g fill="#ff1b33" filter="url(#glow)"><circle cx="143" cy="146" r="7"/><circle cx="470" cy="204" r="9"/><circle cx="320" cy="424" r="12"/><circle cx="423" cy="129" r="4"/></g>
            <g fill="#e3061b"><circle cx="143" cy="146" r="5.500"/><circle cx="470" cy="204" r="7"/><circle cx="320" cy="424" r="9.500"/><circle cx="423" cy="129" r="4"/><circle cx="380" cy="274" r="2.500"/><circle cx="318" cy="437" r="2.500"/></g>
            <g fill="#c4183f"><circle cx="134" cy="190" r="1.800"/><circle cx="241" cy="189" r="2.200"/><circle cx="225" cy="162" r="1.800"/><circle cx="300" cy="220" r="1.500"/><circle cx="369" cy="213" r="1.500"/><circle cx="29" cy="264" r="2.200"/><circle cx="232" cy="262" r="1.500"/><circle cx="72" cy="286" r="1.500"/><circle cx="251" cy="283" r="1.500"/><circle cx="155" cy="337" r="2"/><circle cx="47" cy="353" r="1.800"/><circle cx="305" cy="358" r="1.800"/><circle cx="438" cy="295" r="1.600"/></g>
            <g fill="#e6e6e6"><circle cx="60" cy="132" r="4"/><circle cx="105" cy="254" r="4"/><circle cx="400" cy="245" r="3.500"/><circle cx="492" cy="364" r="2"/><circle cx="480" cy="183" r="1.600"/></g>
          </svg>
          <p>Frame:127 | Time:00:07.20 | Mem:1237.84M, Peak: 1237.84M</p>
          <div class="nav zoom"><svg viewBox="0 0 30 30"><circle cx="18" cy="11.500" r="10.500"/><path d="M11 19l-9 9" stroke="currentColor" stroke-width="4"/><path d="M18 6.500v10M13 11.500h10" stroke="#111" stroke-width="1.800"/></svg></div>
          <div class="nav hand"><svg viewBox="0 0 30 30"><path d="M8 15V6c0-2.500 3-2.500 3 0v-3c0-2.700 3.300-2.700 3.300 0v-.6c0-2.600 3.300-2.600 3.300.4V5c0-2.600 3.200-2.600 3.200 0v12l2.500-4c1.500-2 4-1 3 1.300L22 24c-1.500 3-3.500 5-7 5-4 0-5.500-2-7-5L3.500 15.500c-1-2.400 1.500-3.500 2.700-1.700z"/><path d="M11 6v8M14.300 4v10M17.600 5v9" stroke="#111" stroke-width="1"/></svg></div>
          <div class="sidearrow l"><svg><use href="#closed"/></svg></div><div class="sidearrow rt"><svg><use href="#closed"/></svg></div>
        </div>
      </section>

      <section class="area props-area">
        <div class="bar props-bar"><span class="grp"><span class="c"><svg><use href="#props"/></svg><svg class="dn"><use href="#down"/></svg></span></span><span class="searchbox"><svg><use href="#search"/></svg>Search</span><span class="grp opt"><span class="c"><svg class="dn"><use href="#down"/></svg></span></span></div>
        <div class="props-body">
          <nav class="ptabs">
            <span class="tool"><svg><use href="#tool"/></svg></span>
            <span class="on"><svg><use href="#render"/></svg></span><span><svg><use href="#output"/></svg></span><span><svg><use href="#layers"/></svg></span><span><svg><use href="#scene"/></svg></span><span class="red"><svg><use href="#world"/></svg></span>
            <span class="orange"><svg><use href="#object"/></svg></span><span class="bl"><svg><use href="#wrench"/></svg></span><span class="bl"><svg><use href="#particles"/></svg></span><span class="bl"><svg><use href="#physics"/></svg></span><span class="bl"><svg><use href="#constraint"/></svg></span><span class="gr"><svg><use href="#mesh"/></svg></span><span class="red"><svg><use href="#material"/></svg></span>
          </nav>
          <div class="plist">
            <div class="ctx"><svg><use href="#scene"/></svg><span>Scene</span><svg class="dim"><use href="#pin"/></svg></div>
            <div class="top3"><label>Render Engine</label><div class="dd">Cycles<svg class="dn"><use href="#down"/></svg></div><label>Feature Set</label><div class="dd">Supported<svg class="dn"><use href="#down"/></svg></div><label>Device</label><div class="dd">GPU Compute<svg class="dn"><use href="#down"/></svg></div></div>

            <div class="panel p-sampling">
              <h4><svg><use href="#fold"/></svg>Sampling<svg class="grip"><use href="#grip"/></svg></h4>
              <h5 class="h41"><svg><use href="#fold"/></svg>Viewport<svg class="sl"><use href="#sliders"/></svg></h5>
              <div class="sec b1">
                <div class="f"><label>Noise Threshold</label><i class="cb on"><svg><use href="#check"/></svg></i><em class="val">0.1000</em></div>
                <div class="stack"><label>Max Samples</label><em>64</em><label>Min Samples</label><em>0</em></div>
                <h6><svg><use href="#closed"/></svg><i class="cb"></i>Denoise</h6>
              </div>
              <h5 class="h42"><svg><use href="#fold"/></svg>Render<svg class="sl"><use href="#sliders"/></svg></h5>
              <div class="sec b2">
                <div class="f"><label>Noise Threshold</label><i class="cb on"><svg><use href="#check"/></svg></i><em class="val">0.3000</em></div>
                <div class="stack"><label>Max Samples</label><em>256</em><label>Min Samples</label><em>0</em><label>Time Limit</label><em>0 s</em></div>
                <h6><svg><use href="#fold"/></svg><i class="cb"></i>Denoise</h6>
              </div>
              <div class="deep">
                <div class="f"><label>Denoiser</label><div class="dd">OpenImageDenoise<svg class="dn"><use href="#down"/></svg></div></div>
                <div class="f"><label>Passes</label><div class="dd">Albedo and Normal<svg class="dn"><use href="#down"/></svg></div></div>
                <div class="f"><label>Prefilter</label><div class="dd">Accurate<svg class="dn"><use href="#down"/></svg></div></div>
                <div class="f"><label>Quality</label><div class="dd">High<svg class="dn"><use href="#down"/></svg></div></div>
                <div class="f"><label></label><i class="cb"></i><span>Use GPU</span></div>
              </div>
              <h5 class="h44"><svg><use href="#closed"/></svg>Lights</h5>
              <h5 class="h41"><svg><use href="#closed"/></svg>Advanced</h5>
            </div>

            <div class="panel p-paths">
              <h4><svg><use href="#fold"/></svg>Light Paths<svg class="sl"><use href="#sliders"/></svg><svg class="grip"><use href="#grip"/></svg></h4>
              <h5 class="h41"><svg><use href="#fold"/></svg>Max Bounces</h5>
              <div class="sec b3">
                <div class="stack one"><label>Total</label><em>44</em></div>
                <div class="stack"><label>Diffuse</label><em>8</em><label>Glossy</label><em>8</em><label>Transmission</label><em>12</em><label>Volume</label><em>8</em></div>
                <div class="stack one"><label>Transparent</label><em>8</em></div>
              </div>
              <h5 class="h42"><svg><use href="#fold"/></svg>Clamping</h5>
              <div class="sec b4"><div class="stack"><label>Direct Light</label><em>0.00</em><label>Indirect Light</label><em>10.00</em></div></div>
              <h5 class="h42"><svg><use href="#fold"/></svg>Caustics</h5>
              <div class="sec b5"><div class="stack one"><label>Filter Glossy</label><em>1.00</em></div><div class="f peek"><label></label><i class="cb"></i></div></div>
            </div>
          </div>
          <div class="vscroll"></div>
        </div>
      </section>
    </div>
  </main>

  <footer class="status"><svg><use href="#m-l"/></svg><span>Select</span><svg><use href="#m-m"/></svg><span>Pan View</span><svg><use href="#m-r"/></svg><span>Options</span><span class="ver">4.5.3</span></footer>
</div>
</body>
</html>
```
FILE: styles.css
```css
* { box-sizing: border-box; margin: 0; padding: 0; }
html, body { width: 4096px; height: 2304px; overflow: hidden; }
body { background: #6f6247; color: #e6e6e6; font-family: Inter, "Liberation Sans", sans-serif; font-size: 17.6px; font-feature-settings: "cv08", "tnum"; line-height: 1.2; text-shadow: 0 1.5px 1.5px rgba(0,0,0,.55); white-space: nowrap; }
i, em { font-style: normal; }
svg { display: block; width: 24px; height: 24px; fill: currentColor; flex: none; overflow: visible; }
svg.dn { width: 15px; height: 15px; }
.defs { position: absolute; }
.w { color: #fff; }

/* macOS menu bar */
.menubar { height: 37px; display: flex; justify-content: space-between; color: #fff; font-size: 15.5px; font-feature-settings: normal; text-shadow: none; border-top: 2px solid #7a7468;
  background: linear-gradient(to bottom, transparent 55%, rgba(40,30,10,.18)), linear-gradient(to right, #776748 0, #776944 300px, #6c6c46 420px, #766646 700px, #6c5c47 1300px, #766645 1700px, #706046 2300px, #7c5d38 2560px, #865a3b 2700px, #7a653b 2860px, #7f5f3e 3000px, #7a4a35 3120px, #825d3a 3240px, #79633e 3400px, #81613d 3520px, #716048 3700px, #685c45 4000px, #6f6146 100%); }
.mac-left { display: grid; grid-template-columns: 41px 87.3px 100px; padding-left: 25px; align-items: center; }
.mac-left b { font-size: 15.8px; }
.apple { width: 18px; height: 20px; }
.mac-status { display: grid; align-items: center; width: 1735.4px; grid-template-columns: 44.4px 40.7px 44px 357.9px 49.9px 44.3px 45.2px 51px 51px 47px 40.7px 39.7px 42px 40.6px 47px 44px 47.8px 46.2px 43.5px 40.5px 46.9px 46.1px 43.5px 43.2px 41.3px 43px 54px 46px 99px 65px; }
.mac-status svg { width: 22px; height: 20px; }
.mac-status .batt { width: 30px; height: 17px; }
.cal { width: 21px; height: 21px; border-top: 6px solid #e02a28; background: #fff; color: #222; font-size: 13px; line-height: 15px; text-align: center; font-weight: 600; }
.csa { width: 28px; height: 21px; border: 1.7px solid #fff; border-radius: 5px; font-size: 10.5px; line-height: 17px; text-align: center; margin-left: -3px; }

.window { height: 2267px; background: #181818; border-top: 2px solid #5d5c60; border-bottom: 2px solid #4a4a4a; border-left: 1px solid #4a4a4a; border-radius: 14px 14px 8px 8px; overflow: hidden; position: relative; }
.titlebar { height: 35px; position: relative; display: flex; align-items: center; justify-content: center; }
.lights { position: absolute; left: 8.5px; top: 8.5px; display: flex; gap: 9.2px; }
.lights i { width: 15px; height: 15px; border-radius: 50%; }
.lights .red { border: 4.5px solid #ff5f57; background: #8c1410; }
.amber { background: #febc2e; } .green { background: #28c840; }
.title { display: flex; gap: 7px; align-items: center; color: #959595; font-size: 15.1px; text-shadow: none; font-feature-settings: normal; margin-top: -1px; }
.doc { width: 14px; height: 17px; background: radial-gradient(circle at 50% 60%, #c4763b 0 3px, transparent 3.5px) #8b8b8b; clip-path: polygon(0 0, 65% 0, 100% 30%, 100% 100%, 0 100%); }

.topbar { height: 43.5px; display: flex; align-items: flex-start; }
.app-menu { display: grid; grid-template-columns: 43px 54.2px 56.8px 84.6px 92.6px 63.3px 149px; align-items: center; height: 41px; padding-left: 16px; }
.logo { width: 28px; height: 28px; margin-top: -4px; }
.workspaces { margin-top: 6px; display: grid; gap: 1.6px; grid-template-columns: 89.2px 107.6px 109.7px 119px 143.5px 99px 115.2px 116.2px 134px 175.1px 104.3px 138.8px 33.2px; height: 36px; color: #9b9b9b; }
.workspaces span { background: #1d1d1d; border-radius: 7px 7px 0 0; text-align: center; line-height: 38px; }
.workspaces .on { background: #303030; color: #fff; margin-top: 2px; line-height: 34px; }
.workspaces .plus { font-size: 29px; font-weight: 300; line-height: 34px; }
.selectors { margin-left: 1457.5px; display: flex; gap: 8px; margin-top: 2.5px; }

/* grouped buttons */
.grp { display: inline-flex; height: 34px; border: 1.6px solid #3d3d3d; border-radius: 8px; background: #282828; overflow: hidden; box-shadow: 0 1.5px 1px rgba(0,0,0,.25); }
.c { display: flex; align-items: center; justify-content: center; flex: 1; gap: 3px; border-left: 1.3px solid #3a3a3a; }
.c:first-child { border-left: 0; }
.c svg { width: 23px; height: 23px; } .c svg.dn { width: 15px; height: 15px; }
.c.lit { background: #545454; } .c.blue { background: #4772b3; color: #fff; }
.c.name { background: #1d1d1d; justify-content: space-between; padding-left: 11px; }
.c.off { background: #2f2f2f; color: #484848; } .c.faint { color: #8f8f8f; } .c.ghost { background: #2b2b2b; color: #5c5c5c; }
.dim { color: #8a8a8a; }
.scene-sel { width: 291.7px; } .scene-sel .c { flex: none; width: 34px; } .scene-sel .icon-drop { width: 51px; } .scene-sel .name { width: 172px; padding-right: 7px; }
.layer-sel { width: 259px; } .layer-sel .c { flex: none; width: 34px; } .layer-sel .icon-drop { width: 53px; } .layer-sel .name { width: 136px; }

.work { display: grid; grid-template-columns: 3518.6px 567px; column-gap: 8px; height: 2149px; }
.left { display: flex; flex-direction: column; gap: 6px; }
.right { display: flex; flex-direction: column; gap: 6.3px; }
.area { position: relative; border-radius: 9px; overflow: hidden; background: #222; display: flex; flex-direction: column; }
.area::after { content: ""; position: absolute; inset: 0; border: 1.8px solid #414141; border-radius: 9px; pointer-events: none; z-index: 9; }
.node-area { height: 1826px; } .dope-area { height: 267px; } .play-area { height: 44.5px; }
.image-area { height: 493px; } .props-area { height: 1649.8px; background: #303030; }
.bar { height: 44px; background: #303030; display: flex; align-items: center; justify-content: space-between; flex: none; }
.node-bar { background: #1d1d1d; }
.node-bar-l { display: grid; align-items: center; padding-left: 13px; grid-template-columns: 74.5px 65.6px 78px 58.8px 66.1px 29.5px 100px; }
.ed { width: 52.8px; }
.cb { display: block; width: 21px; height: 21px; border-radius: 4px; background: #545454; border: 1.3px solid #464646; }
.cb.on, .box.on { background: #4772b3; color: #fff; } .cb svg { width: 18px; height: 18px; }
.node-bar-l .cb { width: 22px; height: 22px; }
.node-bar-r { display: flex; align-items: center; padding-right: 13.6px; }
.node-bar-r > .dim { margin-right: 14.5px; }
.g1 { width: 189.3px; margin-right: 8.7px; } .g1 .bd { flex: none; width: 133px; }
.g2 { width: 67.5px; margin-right: 8px; } .g3 { width: 34px; margin-right: 8.4px; } .g4 { width: 67px; }

.node-body { display: flex; flex: 1; min-height: 0; }
.canvas { width: 3485px; position: relative; overflow: hidden; background: #222; }
.vtabs { width: 33.6px; background: #181818; padding-top: 7.4px; display: flex; flex-direction: column; gap: 7px; }
.vtabs span { writing-mode: vertical-rl; display: flex; align-items: center; justify-content: center; line-height: 31px; background: #1d1d1d; border: 1.6px solid #3a3a3a; border-left: 0; border-radius: 0 7px 7px 0; width: 32px; color: #c6c6c6; font-size: 17.2px; }
.vtabs .on { background: #303030; color: #fff; }
.v1 { height: 72.5px; } .v2 { height: 64px; } .v3 { height: 67.6px; } .v4 { height: 92.3px; } .v5 { height: 150.7px; } .v6 { height: 167px; }

/* free node canvas: nodes carry their own coordinates */
.plane { position: absolute; left: -1px; top: -161.5px; width: 3600px; height: 2000px; background: radial-gradient(circle, #2b2b2b 0 2.2px, transparent 3px) 78.3px 174px / 52.49px 52.49px; }
.backdrop { position: absolute; left: 520px; top: 355px; width: 2481px; height: 1395.5px; background: radial-gradient(ellipse farthest-corner at 50% 50%, #e3e3e3 0, #e1e1e1 38%, #d9d9d9 50%, #cbcbcb 60%, #b4b4b4 70%, #8f8f8f 78%, #626262 85%, #3d3d3d 91%, #222 96%, #141414 100%); }
.links { position: absolute; left: 0; top: 0; width: 3600px; height: 2000px; fill: none; }
.edge path { stroke: #1a1a1a; stroke-width: 11.5px; } .wire path { stroke-width: 7px; } .wire path:not([stroke]) { stroke: #c7c729; }
.wire .wv { stroke: #d0d0ee !important; } .wire .wy { stroke: #efeec0 !important; }

.node { position: absolute; background: #323232; border-radius: 10px; box-shadow: 0 0 0 2.5px #161616, 0 7px 18px 4px rgba(0,0,0,.45); font-size: 27.2px; letter-spacing: -.1px; --h: #83344c; padding-bottom: 10px; text-shadow: 0 2px 2px rgba(0,0,0,.5); }
.node h3 { height: 54.6px; margin-bottom: 9px; background: var(--h); border-bottom: 2.5px solid rgba(0,0,0,.3); border-radius: 10px 10px 0 0; font-size: 27.2px; font-weight: 400; display: flex; align-items: center; gap: 11.5px; padding: 4.5px 0 0 28.4px; position: relative; }
.node h3 svg { margin-top: -8px; }
.node h3 .eye { position: absolute; right: 22px; top: 32px; width: 36px; height: 16px; opacity: .55; }
.node h3 .mon { position: absolute; left: 308px; top: 21px; width: 32px; height: 32px; }
.olive { --h: #6e6e23; } .purple { --h: #412c50; } .teal { --h: #3f5b5b; } .brick { --h: #5c3838; } .blue-h { --h: #2a6080; } .wine { --h: #402229; }
.node.selected { box-shadow: 0 0 0 2.5px #fff, 0 7px 18px 4px rgba(0,0,0,.45); }
.n-layers { left: 76.5px; top: 659.3px; width: 384.5px; height: 514px; }
.n-balance { left: 565.5px; top: 646.3px; width: 525px; height: 665px; }
.n-glare { left: 1207px; top: 642.3px; width: 368.5px; height: 869px; }
.n-lens { left: 1704.5px; top: 646.8px; width: 368.5px; height: 496.5px; }
.n-bright { left: 2244px; top: 640.8px; width: 359px; height: 316px; }
.n-gamma { left: 2672.5px; top: 635.3px; width: 368.5px; height: 257.5px; }
.n-composite { left: 3142px; top: 585.5px; width: 369px; height: 132.5px; }
.n-viewer { left: 3153px; top: 765.5px; width: 369px; height: 131.5px; }
.n-ellipse { left: 1677px; top: 1200px; width: 369px; height: 716px; }
.n-pixel { left: 2172px; top: 1374px; width: 368px; height: 497px; }
.n-blur { left: 2677px; top: 1092px; width: 369px; height: 440.5px; }
.row { height: 58.3px; display: flex; align-items: center; padding: 0 28.4px; position: relative; }
.row.out { justify-content: flex-end; }
.drow { height: 65px; display: flex; align-items: center; padding: 0 28px; }
.t1 { margin-top: .8px; } .t2 { margin-top: 1.8px; } .t3 { margin-top: 2.7px; } .t4 { margin-top: 4.4px; } .t7 { margin-top: 7px; } .t12 { margin-top: 11.5px; } .t15 { margin-top: 15px; } .t16 { margin-top: 16px; } .up2 { margin-top: -2.2px; }
.s { position: absolute; left: -12px; top: 17px; width: 24.5px; height: 24.5px; border-radius: 50%; border: 2.5px solid #1a1a1a; background: #a1a1a1; }
.out .s { left: auto; right: -12px; }
.s.y { background: #c7c729; } .s.v { background: #6363c7; } .s.b { background: #cca6d6; }
.drop, .num, .idsel { flex: 1; height: 52px; border: 1.8px solid #3f3f3f; border-radius: 9px; background: #2a2a2a; display: flex; align-items: center; justify-content: space-between; overflow: hidden; box-shadow: 0 2px 1px rgba(0,0,0,.2); }
.drop { padding: 0 6px 0 18px; } .node .dn { width: 22px; height: 22px; }
.num { height: 51px; padding: 0 35px 0 40px; background: linear-gradient(to right, #4772b3 var(--f, 0%), #545454 var(--f, 0%)); }
.num em, .vec em { letter-spacing: 1.15px; } .num em { margin-right: -1px; }
.swatch { margin-left: auto; width: 268px; height: 49px; border-radius: 8px; background: #fff; box-shadow: 0 2px 1px rgba(0,0,0,.3), 0 0 0 1px #444; } .swatch.pale { background: #c3dbff; }
.n-glare .swatch { width: 175px; }
.sub { display: flex; align-items: center; gap: 21px; padding-left: 34.5px; position: relative; } .s52 { height: 52px; } .s56 { height: 56px; padding-bottom: 3px; } .s58 { height: 58.6px; }
.inner { background: #282828; padding: 7.6px 0 7.8px; } .inner.last { border-radius: 0 0 10px 10px; padding-bottom: 15px; }
.box { width: 34.7px; height: 34.7px; border-radius: 6px; background: #545454; border: 1.6px solid #424242; margin-right: 9.3px; } .box svg { width: 31px; height: 31px; }
.lab { width: 104px; }
.vec { margin-left: 28px; margin-right: 28px; height: 103px; border: 1.8px solid #3f3f3f; border-radius: 9px; overflow: hidden; display: flex; flex-direction: column; }
.vec em { flex: 1; display: flex; align-items: center; justify-content: center; background: linear-gradient(to right, #4772b3 var(--f), #545454 var(--f)); } .vec em + em { border-top: 1.8px solid #3f3f3f; }
.idsel .ic { width: 81px; display: flex; align-items: center; gap: 5px; padding-left: 12px; height: 100%; border-right: 1.8px solid #3f3f3f; } .idsel .ic svg:first-child { width: 38px; height: 38px; } .idsel .ic .dn { width: 19px; }
.idsel .nm { flex: 1; background: #1d1d1d; height: 100%; line-height: 49px; padding-left: 19px; }
.idsel .bt { width: 52px; height: 100%; background: #545454; display: flex; align-items: center; justify-content: center; } .idsel .bt svg { width: 30px; height: 30px; } .idsel .film svg { width: 36px; height: 38px; }
.idsel .vl { flex: 1; display: flex; justify-content: space-between; align-items: center; padding: 0 6px 0 19px; }

.crumbs { position: absolute; left: 30.5px; top: 26px; display: flex; align-items: center; height: 25px; } .crumbs span { margin-left: 14.5px; } .crumbs .sm { width: 15px; height: 15px; margin: 0 15px 0 26px; } .crumbs .nt { margin-left: 15px; }
.edge-arrow { position: absolute; left: 0; top: 37px; width: 14px; height: 30px; background: #1b1b1b; border-radius: 0 6px 6px 0; color: #999; } .edge-arrow svg { width: 12px; height: 14px; margin-top: 8px; }
.hscroll { position: absolute; left: 16px; bottom: 4.5px; width: 2309px; height: 5px; background: #373737; border-radius: 2px; }

.npanel { position: absolute; left: 3158.8px; top: 3px; width: 313px; height: 183px; background: #3d3d3d; border-radius: 6px; display: grid; grid-template-columns: 119px 160px; column-gap: 18px; grid-template-rows: 52px 37.2px 37.2px 44px; align-items: center; }
.npanel h4 { grid-column: 1 / 3; display: flex; align-items: center; font-weight: 400; font-size: inherit; gap: 7px; padding-left: 14px; margin-top: -6px; } .npanel h4 svg { width: 15px; height: 15px; } .npanel h4 .grip { width: 18px; margin-left: auto; margin-right: 1px; color: #8a8a8a; }
label { text-align: right; } .npanel label { color: #bbb; margin-top: 7px; } .npanel .dd { margin-top: 7px; }
.dd { height: 33px; border: 1.6px solid #3d3d3d; border-radius: 7px; background: #282828; display: flex; align-items: center; justify-content: space-between; padding: 0 3px 0 12px; }
.npanel .dd { height: 31px; background: #282828; padding-left: 10px; border-color: #303030; }
.chk { grid-column: 2; display: flex; align-items: center; gap: 7px; margin-top: 10px; }

/* dope sheet */
.dope-l { display: grid; align-items: center; padding-left: 13.7px; grid-template-columns: 62px 230px 64.2px 79px 82px 95px 60px; }
.dope-l .grp:first-child, .play-l .grp:first-child { width: 51.8px; } .dope-l .mode { width: 208.5px; } .mode .c { justify-content: flex-start; padding-left: 7px; gap: 9px; } .mode .dn { margin-left: auto; margin-right: 2px; }
.dope-r { display: flex; padding-right: 13.5px; }
.d1 { width: 98.8px; margin-right: 11.5px; } .d2 { width: 51.3px; margin-right: 10px; } .d3 { width: 65.5px; margin-right: 10.3px; } .d4 { width: 118px; margin-right: 10px; } .d5 { width: 86px; } .d5 .c:first-child { flex: none; width: 31px; } .d4 .c { gap: 10px; padding-left: 6px; }
.dope-body { display: flex; flex: 1; }
.channels { width: 339.4px; background: #1d1d1d; }
.find { margin: 4.5px 0 0 3px; width: 331px; height: 32px; border: 1.6px solid #3d3d3d; border-radius: 7px; display: flex; align-items: center; overflow: hidden; padding-left: 7px; } .find span { color: #6a6a6a; flex: 1; padding-left: 9.5px; } .find b { width: 37px; height: 32px; background: #545454; display: flex; align-items: center; justify-content: center; } .find svg { width: 23px; height: 23px; }
.summary { margin-top: 5.8px; height: 28.2px; background: #4e2727; color: #bfb2b2; display: flex; align-items: center; gap: 7px; padding-left: 5px; } .summary svg { width: 15px; height: 15px; color: #fff; }
.timeline { flex: 1; position: relative; background: #222; }
.ruler { width: 2806px; height: 39.5px; background: #1d1d1d; display: grid; grid-template-columns: repeat(26, 104.35px); padding-left: 42px; color: #9f9f9f; text-align: center; line-height: 43px; letter-spacing: .3px; text-shadow: none; }
.tracks { position: relative; width: 2806px; height: 184px; background: #222; }
.range { position: absolute; left: 105px; width: 2597px; top: 0; bottom: 0; background: #303030; border-left: 2px solid #080808; border-right: 2px solid #080808; }
.ticks { position: absolute; inset: 0; background: repeating-linear-gradient(to right, #161616 0 1.6px, transparent 1.6px 104.35px) 93px 0, repeating-linear-gradient(to right, transparent 0 52.1px, #232323 52.1px 53.3px, transparent 53.3px 104.35px) 93px 0; background-repeat: no-repeat; }
.band { position: absolute; left: 0; right: 0; top: 3px; height: 27.2px; background: rgba(110,20,20,.2); }
.tscroll { position: absolute; left: 20px; bottom: 4.5px; width: 2767px; height: 5px; background: rgba(110,110,110,.25); }
.playhead { position: absolute; left: 1396px; top: 4.5px; bottom: 0; width: 48px; display: flex; flex-direction: column; align-items: center; }
.playhead b { width: 48px; height: 30px; background: #4772b3; border-radius: 6px; font-weight: 400; color: #fff; text-align: center; line-height: 29px; letter-spacing: .3px; } .playhead::after { content: ""; width: 3px; flex: 1; background: #4d7cc2; }

.play-l { display: grid; align-items: center; padding-left: 13.7px; grid-template-columns: 62px 232px 65px 80px; width: 1601px; } .play-l .grp + .grp { width: 215.3px; } .pb.c { flex: none; width: 114px; padding-left: 4px; } .play-l .c { gap: 10px; } .play-l .grp:first-child .c, .dope-l .grp:first-child .c { gap: 3px; }
.play-c { display: flex; gap: 10.2px; flex: 1; } .rec { width: 66.8px; } .trans { width: 201.4px; } .trans .c { border-left-color: #3d3d3d; } .trans svg { width: 22px; height: 22px; }
.play-r { display: flex; gap: 11.5px; padding-right: 14px; } .cur { width: 125.8px; } .ends { width: 323.2px; } .ends .c { flex: none; } .ends .ck { width: 31px; } .ends .st { width: 149px; } .ends .en { flex: 1; } .st.c, .en.c { justify-content: space-between; padding: 0 22px 0 25px; }

/* image editor */
.image-bar { display: grid; padding-left: 13.3px; grid-template-columns: 62px 132.3px 65.7px 91.3px 200px; align-items: center; }
.image-bar .grp:first-child { width: 52px; } .vw { width: 111px; } .vw .c { gap: 9px; } .rr { width: 240px; } .rr .ri { flex: none; width: 52px; } .rr .name { flex: none; width: 140px; }
.render { flex: 1; position: relative; background: #020211; overflow: hidden; }
.map { width: 567px; height: 449px; overflow: hidden; }
.grid path, .coast path { fill: none; stroke: #5fe3da; stroke-width: 1.5px; vector-effect: non-scaling-stroke; } .coast path { stroke: #c9cdf8; stroke-width: 1.5px; } .coast .hot { stroke: #fff; stroke-width: 3px; stroke-dasharray: 7 2 3 1; }
.render p { position: absolute; left: 19.5px; top: 7px; font-size: 18.4px; color: #fff; text-shadow: 0 0 3px #000; font-feature-settings: "tnum"; }
.nav { position: absolute; width: 46px; height: 46px; border-radius: 50%; background: rgba(14,14,14,.75); display: flex; align-items: center; justify-content: center; color: #ddd; } .nav svg { width: 27px; height: 27px; } .zoom { left: 508px; top: 16px; background: rgba(10,10,20,.4); } .hand { left: 507px; top: 69px; }
.sidearrow { position: absolute; top: 38px; width: 13px; height: 28px; background: rgba(30,30,30,.6); color: #aaa; padding-top: 7px; } .sidearrow svg { width: 12px; height: 13px; } .sidearrow.l { left: 0; } .sidearrow.rt { right: 0; transform: scaleX(-1); }

/* properties editor */
.props-bar { height: 43px; display: grid; grid-template-columns: 177px 330px 34px; padding-left: 13.3px; justify-content: start; } .props-bar .grp:first-child { width: 53px; }
.searchbox { width: 191.6px; height: 33px; border: 1.6px solid #3d3d3d; border-radius: 7px; background: #1d1d1d; display: flex; align-items: center; gap: 11px; padding-left: 7px; color: #686868; } .searchbox svg { color: #e6e6e6; }
.props-body { flex: 1; display: flex; position: relative; min-height: 0; }
.ptabs { width: 49px; background: #1d1d1d; padding: 19.2px 0 0 5px; display: flex; flex-direction: column; color: #b0b0b0; }
.ptabs span { height: 43.7px; margin-bottom: 3.9px; display: flex; align-items: center; justify-content: center; border-radius: 7px 0 0 7px; padding-right: 2px; } .ptabs .tool { margin-bottom: 13.2px; color: #b8b8b8; } .ptabs .on { background: #303030; color: #dcdcdc; }
.ptabs span:nth-child(6) { margin-bottom: 17.5px; }
.ptabs .red { color: #ad5862; } .orange { color: #c8834c; } .bl { color: #5f87d6; } .gr { color: #14b58a; }
.plist { width: 491.5px; margin-left: 13.7px; overflow: hidden; padding-top: .8px; }
.ctx { height: 61.4px; display: flex; align-items: center; padding: 0 5px 0 4.5px; } .ctx span { margin-left: 14px; flex: 1; }
.top3 { margin-top: 9.3px; display: grid; grid-template-columns: 189px 286.5px; column-gap: 16px; grid-auto-rows: 42px; align-items: center; }
.panel { background: #3d3d3d; border-radius: 6px 6px 5px 5px; overflow: hidden; } .p-sampling { margin-top: 12.3px; } .p-paths { margin-top: 4px; height: 620px; }
.panel h4, .panel h5, .panel h6 { font: inherit; font-weight: 400; display: flex; align-items: center; } .panel h4 { height: 43.6px; padding-left: 14px; } .panel h5 { padding-left: 38.5px; }
.panel h4 > svg:first-child, .panel h5 > svg:first-child, .panel h6 > svg { width: 15px; height: 15px; margin-right: 7.5px; } .panel .grip { width: 18px; height: 12px; margin: 0 17px 0 auto; color: #8a8a8a; } .panel .sl { margin: 0 49px 0 auto; } .panel h4 .sl { margin-right: 14px; } .panel .sl + .grip { margin-left: 0; }
.h41 { height: 41.1px; } .h42 { height: 42.6px; } .h44 { height: 44.5px; }
.sec { background: #353535; } .b1 { height: 180.2px; padding-top: 14.6px; border-radius: 0 0 6px 6px; } .b2 { height: 213.3px; padding-top: 14.5px; } .b3 { height: 247px; padding-top: 14.4px; } .b4 { height: 95.4px; padding-top: 15px; } .b5 { height: 80px; padding-top: 15.5px; }
.f { display: flex; align-items: center; height: 32.4px; } .f label { width: 191.7px; margin-right: 16.7px; } .f .cb.on { margin-right: 12px; }
.val, .stack em { background: #545454; border: 1.5px solid #464646; display: flex; align-items: center; justify-content: center; letter-spacing: .7px; } .val { width: 235.5px; height: 32.4px; border-radius: 7px; box-shadow: 0 1.5px 1px rgba(0,0,0,.25); }
.stack { margin-top: 9.7px; display: grid; grid-template-columns: 191.7px 268.5px; column-gap: 16.5px; grid-auto-rows: 33.3px; } .stack label { line-height: 33.5px; } .stack em:not(:last-child) { border-bottom: 0; } .stack em:nth-child(2) { border-radius: 7px 7px 0 0; } .stack em:last-child { border-radius: 0 0 7px 7px; box-shadow: 0 1.5px 1px rgba(0,0,0,.25); } .stack.one em { border-radius: 7px; }
.b2 .stack { grid-auto-rows: 33.6px; } .b3 .stack { grid-auto-rows: 33.8px; } .b3 .stack.one { grid-auto-rows: 32.4px; } .b3 .stack.one:first-child, .b4 .stack, .b5 .stack { margin-top: 0; } .b4 .stack { grid-auto-rows: 33px; } .b5 .one { grid-auto-rows: 32px; }
.panel h6 { height: 40px; margin-top: 17px; padding-left: 38.5px; } .b2 h6 { margin-top: 16px; } .panel h6 .cb { margin: 0 6px 0 -1.5px; width: 22px; }
.deep { background: #2d2d2d; height: 209.7px; padding-top: 12.9px; color: #828282; border-radius: 0 0 6px 6px; text-shadow: none; } .deep .f { height: 37px; } .deep .dd { width: 269px; border-color: #363636; background: #2b2b2b; } .deep .cb { background: #3d3d3d; border-color: #383838; margin-right: 8px; }
.peek { margin-top: 5px; }
.vscroll { position: absolute; left: 558px; top: 3px; width: 6px; height: 439px; background: #3f3f3f; border-radius: 3px; }

.status { height: 36px; display: flex; align-items: center; padding: 0 21px 0 16px; color: #989898; } .status svg { width: 18px; height: 25px; margin-right: 3.5px; } .status span { margin-right: 15.5px; } .status .ver { margin: 0 0 0 auto; letter-spacing: .7px; }
```
